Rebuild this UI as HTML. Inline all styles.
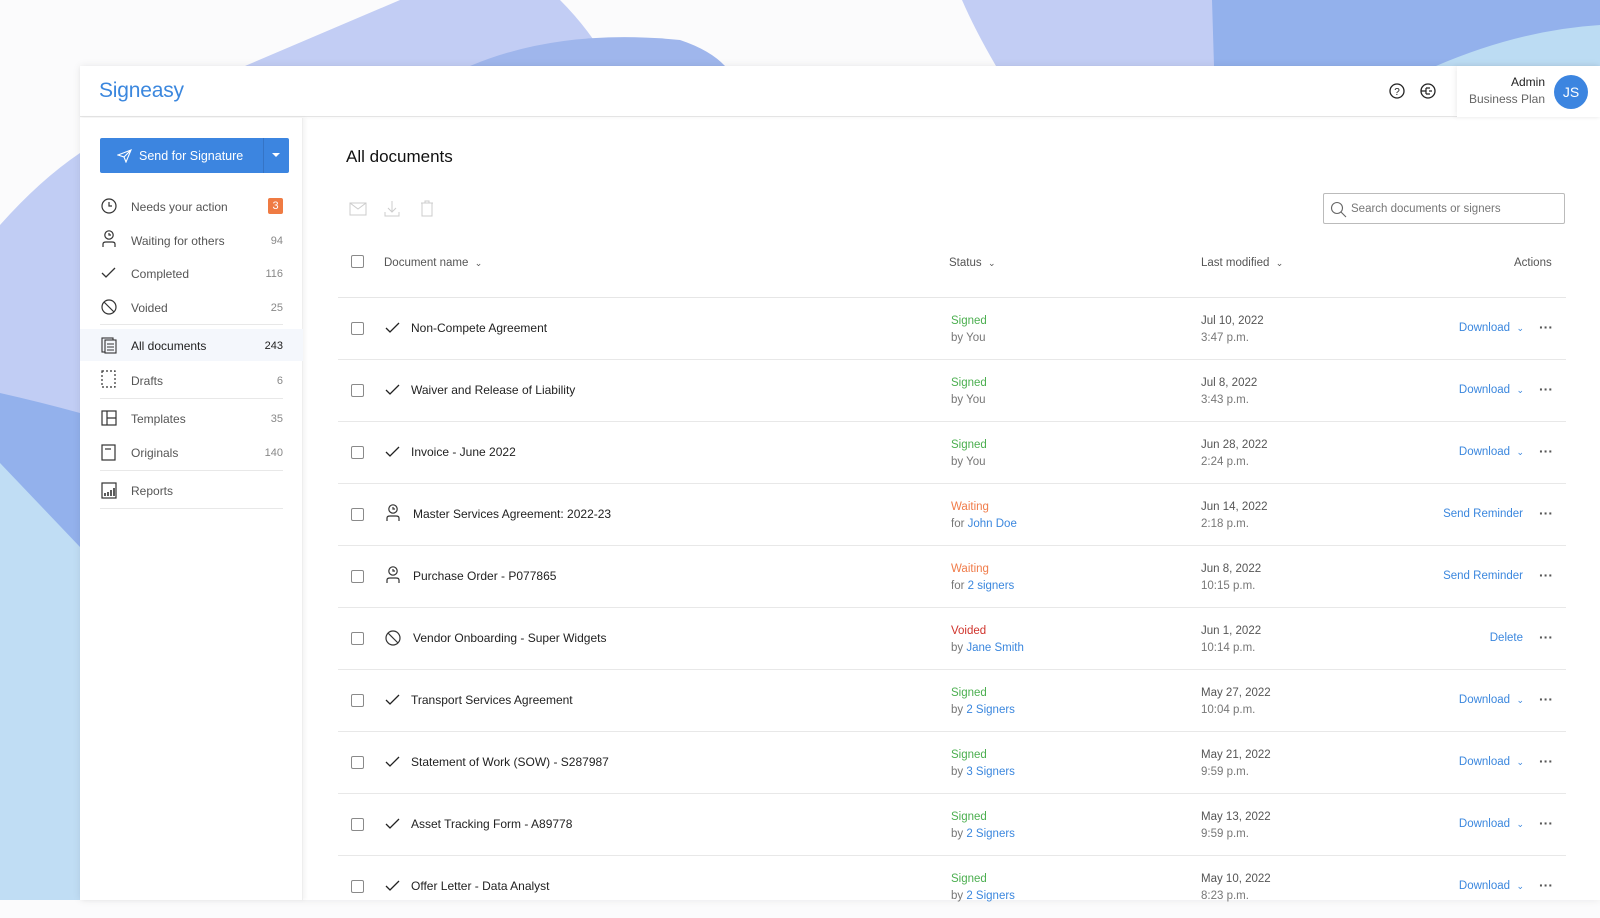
<!DOCTYPE html>
<html><head><meta charset="utf-8">
<style>
*{margin:0;padding:0;box-sizing:border-box}
html,body{width:1600px;height:900px;overflow:hidden;background:#fbfbfc;font-family:"Liberation Sans",sans-serif;color:#222}
.abs{position:absolute}
#bg{position:absolute;left:0;top:0}
.card{position:absolute;left:80px;top:66px;width:1520px;height:834px;background:#fff;box-shadow:0 0 8px rgba(0,0,0,.08)}
.hdr{position:absolute;left:0;top:0;width:1520px;height:51px;border-bottom:1px solid #e4e4e4;box-shadow:0 1px 3px rgba(0,0,0,.04)}
.logo{position:absolute;left:19px;top:13px;font-size:21px;color:#3b87de;letter-spacing:-.2px}
.admin{position:absolute;left:1377px;top:0;width:143px;height:51px;box-shadow:-2px 0 5px rgba(0,0,0,.06);background:#fff}
.side{position:absolute;left:0;top:52px;width:223px;height:782px;background:#fff;box-shadow:2px 0 4px rgba(0,0,0,.05);border-right:1px solid #eee}
.btn{position:absolute;left:20px;top:20px;width:189px;height:35px;background:#3c85e0;border-radius:2px;color:#fff;font-size:12.5px}
.nav{position:absolute;left:0;width:223px;height:32px;font-size:12px;color:#555}
.nav .ic{position:absolute;left:21px;top:10px}
.nav .lb{position:absolute;left:51px;top:12px}
.nav .ct{position:absolute;right:20px;top:13px;font-size:11px;color:#888}
.sep{position:absolute;left:20px;width:183px;height:1px;background:#e8e8e8}
.t{position:absolute;white-space:nowrap}
.cb{position:absolute;width:13px;height:13px;border:1px solid #8a8a8a;border-radius:2px}
.row{position:absolute;left:338px;width:1228px;height:62px;border-bottom:1px solid #e8e8e8}
.row .cb{left:13px;top:24px}
.row .ic{position:absolute;left:47px;top:23px}
.row .nm{position:absolute;left:73px;top:23px;font-size:12px;color:#222}
.row .s1{position:absolute;left:613px;top:17px;font-size:11.5px}
.row .s2{position:absolute;left:613px;top:34px;font-size:11.5px;color:#777}
.row .d1{position:absolute;left:863px;top:17px;font-size:11.5px;color:#555}
.row .d2{position:absolute;left:863px;top:34px;font-size:11.5px;color:#777}
.row .ac{position:absolute;right:42px;top:24px;font-size:11.5px;color:#3b87de}
.row .dots{position:absolute;right:13px;top:21px;font-size:14px;color:#555;font-weight:bold}
.g{color:#4caf50}.o{color:#f07c4a}.r{color:#d0342c}.b{color:#3b87de}
</style></head><body>
<svg id="bg" width="1600" height="900">
<path d="M245 66 L400 0 L560 0 Q590 30 610 66 Z" fill="#c2cdf4"/>
<path d="M470 66 Q560 28 680 40 Q710 50 725 66 Z" fill="#9fb6ec"/>
<path d="M962 0 L1600 0 L1600 66 L996 66 Q975 30 962 0Z" fill="#c2cdf4"/>
<path d="M1212 0 L1600 0 L1600 66 L1214 66 Z" fill="#93b1ec"/>
<path d="M1436 66 Q1520 30 1600 25 L1600 66Z" fill="#bcdcf3"/>
<path d="M0 225 Q40 180 80 153 L80 900 L0 900Z" fill="#c1cdf4"/>
<path d="M0 393 Q40 402 80 413 L80 900 L0 900Z" fill="#93b1ec"/>
<path d="M0 463 L80 547 L80 900 L0 900Z" fill="#c0ddf4"/>
</svg>
<div class="card">
 <div class="hdr">
  <div class="logo">Signeasy</div>
  <svg class="abs" style="left:1308px;top:16px" width="20" height="20" viewBox="0 0 20 20"><circle cx="9" cy="9" r="7" fill="none" stroke="#222" stroke-width="1.3"/><text x="9" y="13" font-size="10" text-anchor="middle" font-family="Liberation Sans" fill="#222">?</text></svg>
  <svg class="abs" style="left:1339px;top:16px" width="20" height="20" viewBox="0 0 20 20"><circle cx="9" cy="9" r="7" fill="none" stroke="#222" stroke-width="1.3"/><path d="M2 9h5M7 6v6M7 6h4M7 12h4M10 9h3" stroke="#222" stroke-width="1.2" fill="none"/></svg>
  <div class="admin">
   <div class="t" style="right:55px;top:9px;font-size:12px;color:#222">Admin</div>
   <div class="t" style="right:55px;top:26px;font-size:12px;color:#666">Business Plan</div>
   <div class="abs" style="left:97px;top:9px;width:34px;height:34px;border-radius:50%;background:#3c85e0;color:#fff;font-size:14px;text-align:center;line-height:34px">JS</div>
  </div>
 </div>
 <div class="side">
  <div class="btn">
   <svg class="abs" style="left:17px;top:11px" width="15" height="14" viewBox="0 0 15 14"><path d="M1 6 L14 1 L9 13 L7 8 Z M7 8 L14 1" fill="none" stroke="#fff" stroke-width="1.1"/></svg>
   <div class="t" style="left:39px;top:11px">Send for Signature</div>
   <div class="abs" style="left:163px;top:0;width:1px;height:35px;background:#3574c6"></div>
   <div class="abs" style="left:172px;top:15px;width:0;height:0;border-left:4px solid transparent;border-right:4px solid transparent;border-top:4px solid #fff"></div>
  </div>
  <div class="nav" style="top:70px"><svg class="ic" width="16" height="16"><circle cx="8" cy="8" r="7" fill="none" stroke="#333" stroke-width="1.2"/><path d="M8 4v4h3" fill="none" stroke="#333" stroke-width="1.2"/></svg><span class="lb">Needs your action</span><span class="abs" style="right:20px;top:10px;width:15px;height:16px;background:#ef7b43;color:#fff;font-size:11px;text-align:center;line-height:16px;border-radius:2px">3</span></div>
  <div class="nav" style="top:104px"><svg class="ic" style="top:8px" width="16" height="18"><circle cx="8" cy="5" r="4.2" fill="none" stroke="#333" stroke-width="1.2"/><path d="M8 3v2h2M2 17v-3q0-2 3-2h6q3 0 3 2v3" fill="none" stroke="#333" stroke-width="1.2"/></svg><span class="lb">Waiting for others</span><span class="ct">94</span></div>
  <div class="nav" style="top:137px"><svg class="ic" width="16" height="16"><path d="M1 8l4 4 9-9" fill="none" stroke="#333" stroke-width="1.3"/></svg><span class="lb">Completed</span><span class="ct">116</span></div>
  <div class="nav" style="top:171px"><svg class="ic" width="16" height="16"><circle cx="8" cy="8" r="7" fill="none" stroke="#333" stroke-width="1.2"/><path d="M3 3l10 10" stroke="#333" stroke-width="1.2"/></svg><span class="lb">Voided</span><span class="ct">25</span></div>
  <div class="sep" style="top:206px"></div>
  <div class="nav" style="top:211px;background:#f4f7fc"><svg class="ic" style="top:8px" width="17" height="17"><rect x="1" y="1" width="11" height="14" fill="none" stroke="#333" stroke-width="1.1"/><rect x="4" y="3" width="11" height="13" fill="#f4f7fc" stroke="#333" stroke-width="1.1"/><path d="M6 7h7M6 10h7M6 13h7" stroke="#333"/></svg><span class="lb" style="color:#222;top:10px">All documents</span><span class="ct" style="color:#222;top:11px">243</span></div>
  <div class="nav" style="top:244px"><svg class="ic" style="top:8px" width="16" height="18"><rect x="1" y="1" width="13" height="16" fill="none" stroke="#333" stroke-width="1.2" stroke-dasharray="2 2"/></svg><span class="lb">Drafts</span><span class="ct">6</span></div>
  <div class="sep" style="top:280px"></div>
  <div class="nav" style="top:282px"><svg class="ic" width="16" height="16"><rect x="1" y="1" width="14" height="14" fill="none" stroke="#333" stroke-width="1.2"/><path d="M6 1v14M6 8h9" stroke="#333" stroke-width="1.2"/></svg><span class="lb">Templates</span><span class="ct">35</span></div>
  <div class="nav" style="top:316px"><svg class="ic" width="16" height="17"><rect x="1" y="1" width="13" height="15" fill="none" stroke="#333" stroke-width="1.2"/><path d="M4 5h6" stroke="#333" stroke-width="1.2"/></svg><span class="lb">Originals</span><span class="ct">140</span></div>
  <div class="sep" style="top:352px"></div>
  <div class="nav" style="top:354px"><svg class="ic" width="16" height="17"><rect x="1" y="1" width="14" height="15" fill="none" stroke="#333" stroke-width="1.2"/><path d="M4 14v-3M7 14v-4M10 14v-6M13 14v-8" stroke="#333" stroke-width="1.6"/></svg><span class="lb">Reports</span></div>
  <div class="sep" style="top:390px"></div>
 </div>
</div>
<div class="t" style="left:346px;top:147px;font-size:17px;color:#111">All documents</div>
<svg class="abs" style="left:349px;top:202px" width="18" height="14"><rect x="1" y="1" width="16" height="12" fill="none" stroke="#ccc"/><path d="M1 1l8 6 8-6" fill="none" stroke="#ccc"/></svg>
<svg class="abs" style="left:384px;top:200px" width="16" height="17"><path d="M8 1v11M4 8l4 4 4-4M1 12v4h14v-4" fill="none" stroke="#ccc"/></svg>
<svg class="abs" style="left:420px;top:200px" width="14" height="17"><path d="M1 3h12M5 3V1h4v2M2 3v13h10V3" fill="none" stroke="#ccc"/></svg>
<div class="abs" style="left:1323px;top:193px;width:242px;height:31px;border:1px solid #bbb;border-radius:2px">
 <svg class="abs" style="left:6px;top:7px" width="17" height="17"><circle cx="7" cy="7" r="5.5" fill="none" stroke="#666" stroke-width="1.1"/><path d="M11 11l5 5" stroke="#666" stroke-width="1.1"/></svg>
 <div class="t" style="left:27px;top:9px;font-size:11.5px;color:#777">Search documents or signers</div>
</div>
<div class="cb" style="left:351px;top:255px"></div>
<div class="t" style="left:384px;top:257px;font-size:11.5px;color:#555">Document name &nbsp;<span style="font-size:9px">&#8964;</span></div>
<div class="t" style="left:949px;top:257px;font-size:11.5px;color:#555">Status &nbsp;<span style="font-size:9px">&#8964;</span></div>
<div class="t" style="left:1201px;top:257px;font-size:11.5px;color:#555">Last modified &nbsp;<span style="font-size:9px">&#8964;</span></div>
<div class="t" style="left:1514px;top:257px;font-size:11.5px;color:#555">Actions</div>
<div class="abs" style="left:338px;top:297px;width:1228px;height:1px;background:#e6e6e6"></div>

<div class="row" style="top:298px"><div class="cb"></div><svg class="ic" width="16" height="14"><path d="M1 7l4 4 9-9" fill="none" stroke="#222" stroke-width="1.3"/></svg><div class="nm">Non-Compete Agreement</div><div class="s1 g">Signed</div><div class="s2">by You</div><div class="d1">Jul 10, 2022</div><div class="d2">3:47 p.m.</div><div class="ac">Download &nbsp;<span style="font-size:9px">&#8964;</span></div><div class="dots">···</div></div>
<div class="row" style="top:360px"><div class="cb"></div><svg class="ic" width="16" height="14"><path d="M1 7l4 4 9-9" fill="none" stroke="#222" stroke-width="1.3"/></svg><div class="nm">Waiver and Release of Liability</div><div class="s1 g">Signed</div><div class="s2">by You</div><div class="d1">Jul 8, 2022</div><div class="d2">3:43 p.m.</div><div class="ac">Download &nbsp;<span style="font-size:9px">&#8964;</span></div><div class="dots">···</div></div>
<div class="row" style="top:422px"><div class="cb"></div><svg class="ic" width="16" height="14"><path d="M1 7l4 4 9-9" fill="none" stroke="#222" stroke-width="1.3"/></svg><div class="nm">Invoice - June 2022</div><div class="s1 g">Signed</div><div class="s2">by You</div><div class="d1">Jun 28, 2022</div><div class="d2">2:24 p.m.</div><div class="ac">Download &nbsp;<span style="font-size:9px">&#8964;</span></div><div class="dots">···</div></div>
<div class="row" style="top:484px"><div class="cb"></div><svg class="ic" style="top:20px" width="16" height="18"><circle cx="8" cy="5" r="4.2" fill="none" stroke="#333" stroke-width="1.2"/><path d="M8 3v2h2M2 17v-3q0-2 3-2h6q3 0 3 2v3" fill="none" stroke="#333" stroke-width="1.2"/></svg><div class="nm" style="left:75px">Master Services Agreement: 2022-23</div><div class="s1 o">Waiting</div><div class="s2">for <span class="b">John Doe</span></div><div class="d1">Jun 14, 2022</div><div class="d2">2:18 p.m.</div><div class="ac" style="right:43px">Send Reminder</div><div class="dots">···</div></div>
<div class="row" style="top:546px"><div class="cb"></div><svg class="ic" style="top:20px" width="16" height="18"><circle cx="8" cy="5" r="4.2" fill="none" stroke="#333" stroke-width="1.2"/><path d="M8 3v2h2M2 17v-3q0-2 3-2h6q3 0 3 2v3" fill="none" stroke="#333" stroke-width="1.2"/></svg><div class="nm" style="left:75px">Purchase Order - P077865</div><div class="s1 o">Waiting</div><div class="s2">for <span class="b">2 signers</span></div><div class="d1">Jun 8, 2022</div><div class="d2">10:15 p.m.</div><div class="ac" style="right:43px">Send Reminder</div><div class="dots">···</div></div>
<div class="row" style="top:608px"><div class="cb"></div><svg class="ic" style="top:22px" width="17" height="17"><circle cx="8" cy="8" r="7" fill="none" stroke="#333" stroke-width="1.2"/><path d="M3 3l10 10" stroke="#333" stroke-width="1.2"/></svg><div class="nm" style="left:75px">Vendor Onboarding - Super Widgets</div><div class="s1 r">Voided</div><div class="s2">by <span class="b">Jane Smith</span></div><div class="d1">Jun 1, 2022</div><div class="d2">10:14 p.m.</div><div class="ac" style="right:43px">Delete</div><div class="dots">···</div></div>
<div class="row" style="top:670px"><div class="cb"></div><svg class="ic" width="16" height="14"><path d="M1 7l4 4 9-9" fill="none" stroke="#222" stroke-width="1.3"/></svg><div class="nm">Transport Services Agreement</div><div class="s1 g">Signed</div><div class="s2">by <span class="b">2 Signers</span></div><div class="d1">May 27, 2022</div><div class="d2">10:04 p.m.</div><div class="ac">Download &nbsp;<span style="font-size:9px">&#8964;</span></div><div class="dots">···</div></div>
<div class="row" style="top:732px"><div class="cb"></div><svg class="ic" width="16" height="14"><path d="M1 7l4 4 9-9" fill="none" stroke="#222" stroke-width="1.3"/></svg><div class="nm">Statement of Work (SOW) - S287987</div><div class="s1 g">Signed</div><div class="s2">by <span class="b">3 Signers</span></div><div class="d1">May 21, 2022</div><div class="d2">9:59 p.m.</div><div class="ac">Download &nbsp;<span style="font-size:9px">&#8964;</span></div><div class="dots">···</div></div>
<div class="row" style="top:794px"><div class="cb"></div><svg class="ic" width="16" height="14"><path d="M1 7l4 4 9-9" fill="none" stroke="#222" stroke-width="1.3"/></svg><div class="nm">Asset Tracking Form - A89778</div><div class="s1 g">Signed</div><div class="s2">by <span class="b">2 Signers</span></div><div class="d1">May 13, 2022</div><div class="d2">9:59 p.m.</div><div class="ac">Download &nbsp;<span style="font-size:9px">&#8964;</span></div><div class="dots">···</div></div>
<div class="row" style="top:856px;border-bottom:none"><div class="cb"></div><svg class="ic" width="16" height="14"><path d="M1 7l4 4 9-9" fill="none" stroke="#222" stroke-width="1.3"/></svg><div class="nm">Offer Letter - Data Analyst</div><div class="s1 g">Signed</div><div class="s2">by <span class="b">2 Signers</span></div><div class="d1">May 10, 2022</div><div class="d2">8:23 p.m.</div><div class="ac">Download &nbsp;<span style="font-size:9px">&#8964;</span></div><div class="dots">···</div></div>
</body></html>
